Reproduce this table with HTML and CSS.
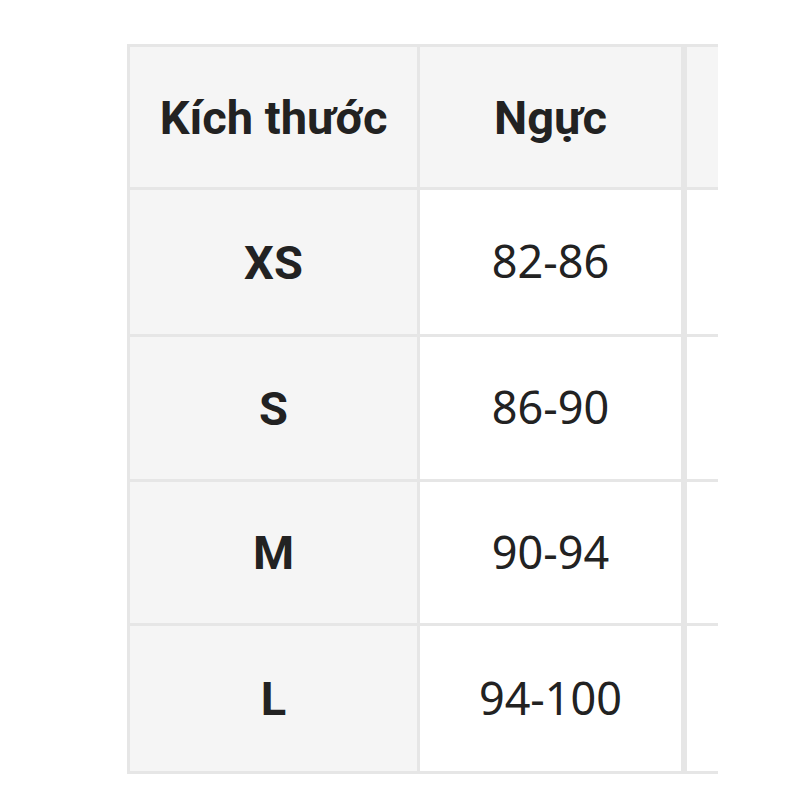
FILE: index.html
```html
<!DOCTYPE html>
<html lang="vi">
<head>
<meta charset="utf-8">
<link rel="stylesheet" href="styles.css">
</head>
<body>
<div class="clip">
  <div class="grid">
    <div class="cell head">Kích thước</div>
    <div class="cell head">Ngực</div>
    <div class="cell head extra"></div>

    <div class="cell size">XS</div>
    <div class="cell val">82-86</div>
    <div class="cell val extra"></div>

    <div class="cell size">S</div>
    <div class="cell val">86-90</div>
    <div class="cell val extra"></div>

    <div class="cell size">M</div>
    <div class="cell val">90-94</div>
    <div class="cell val extra"></div>

    <div class="cell size">L</div>
    <div class="cell val">94-100</div>
    <div class="cell val extra"></div>
  </div>
</div>
</body>
</html>
```

FILE: styles.css
```css
html, body {
  margin: 0;
  padding: 0;
  background: #ffffff;
}

.clip {
  margin: 44px 0 0 127px;
  width: 591px;
  overflow: hidden;
}

.grid {
  display: grid;
  width: max-content;
  grid-template-columns: 287px 261px 300px;
  grid-template-rows: 140px 144px 142px 141px 145px;
  gap: 3px;
  padding: 3px 0 3px 3px;
  background: #e6e6e6;
}

.cell {
  display: flex;
  align-items: center;
  justify-content: center;
  color: #222222;
}

.head {
  background: #f5f5f5;
  font-family: Roboto, "Liberation Sans", sans-serif;
  font-weight: 700;
  font-size: 47px;
}

.size {
  background: #f5f5f5;
  font-family: Roboto, "Liberation Sans", sans-serif;
  font-weight: 700;
  font-size: 47px;
}

.val {
  background: #ffffff;
  font-family: "Noto Sans", "Open Sans", sans-serif;
  font-weight: 400;
  font-size: 45px;
  padding-bottom: 3px;
}

.extra {
  border-left: 3px solid #e6e6e6;
}

.head.extra {
  background: #f5f5f5;
}
```
